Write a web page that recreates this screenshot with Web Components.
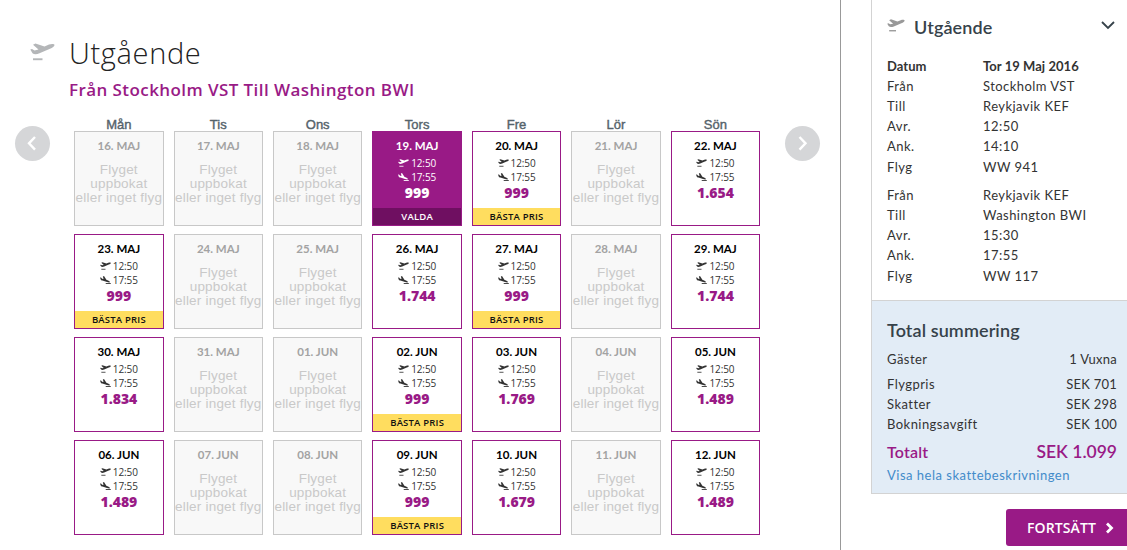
<!DOCTYPE html>
<html lang="sv">
<head>
<meta charset="utf-8">
<title>Utgående</title>
<style>
    body {
        margin: 0;
        background: #fff;
        font-family: "Lato", "Liberation Sans", sans-serif;
        color: #222;
        height: 550px;
        overflow: hidden;
    }
</style>
</head>
<body>
<booking-page></booking-page>

<script>
const PLANES = {
    takeoff: '<path d="M0.300 6.600 L2 6 L4.500 7.400 L8.500 6.600 L3 1.800 L5.500 0.400 L14.500 3.500 L19 1.600 C21.500 0.700 24.500 0.900 24.500 2 C24.500 3.400 22.500 4.800 20 5.800 L9.500 10.300 C6.500 11.600 4 11.500 2.500 10.200 Z"/><path d="M3 15.300h9.500v1.900h-9.500z"/>',
    landing: '<path d="M0.300 3.200 L2.300 3.200 L4.800 6.200 L8 7 L6.500 0.500 L9.500 0.500 L14.500 8.300 L19.500 10.500 C22 11.700 23 13.200 22.200 14.200 C21.300 15.200 18.500 14.600 16 13.600 L5.500 10.400 C3 9.500 1.500 8.300 1.100 6.500 Z"/><path d="M13 15.800h11.500v2h-11.500z"/>'
};

class PlaneIcon extends HTMLElement {
    constructor() {
        super();
        this.attachShadow({ mode: 'open' });
    }

    connectedCallback() {
        const kind = this.getAttribute('kind') || 'takeoff';
        this.shadowRoot.innerHTML = `
            <style>
                :host { display: block; flex: none; width: 24px; height: 18px; }
                svg { display: block; width: 100%; height: 100%; fill: currentColor; }
            </style>
            <svg viewBox="0 0 25 18" preserveAspectRatio="none">${PLANES[kind]}</svg>
        `;
    }
}

class RoundArrow extends HTMLElement {
    constructor() {
        super();
        this.attachShadow({ mode: 'open' });
    }

    connectedCallback() {
        const next = this.getAttribute('direction') === 'next';
        this.shadowRoot.innerHTML = `
            <style>
                :host { display: block; width: 35px; height: 35px; border-radius: 50%; background: #d5d6d8; cursor: pointer; }
                svg { display: block; fill: none; stroke: #fff; stroke-width: 2.4; }
            </style>
            <svg width="35" height="35" viewBox="0 0 35 35">
                <path d="${next ? 'M14.500 11l6 6.300-6 6.300' : 'M20 11l-6 6.300 6 6.300'}"/>
            </svg>
        `;
    }
}

class DayCell extends HTMLElement {
    constructor() {
        super();
        this.attachShadow({ mode: 'open' });
    }

    connectedCallback() {
        const date = this.getAttribute('date');
        const price = this.getAttribute('price');
        const state = this.getAttribute('state');
        const badge = { best: 'BÄSTA PRIS', selected: 'VALDA' }[state];

        const style = `
            <style>
                :host {
                    display: flex;
                    flex-direction: column;
                    box-sizing: border-box;
                    height: 95px;
                    border: 1px solid #991a86;
                    background: #fff;
                    text-align: center;
                    color: #000;
                    overflow: hidden;
                }
                :host([state="full"]) { border-color: #c8c8c8; background: #f8f8f8; color: #a3a3a3; }
                :host([state="selected"]) { background: #991a86; color: #fff; }
                .date { margin-top: 6px; font: 700 11.500px/15px "Lato", sans-serif; }
                .full { margin: 10px -4px 0; font: 13.500px/14px "Liberation Sans", sans-serif; letter-spacing: 0.2px; color: #c9c9c9; white-space: nowrap; }
                .time { display: flex; justify-content: center; align-items: center; gap: 2px; height: 14px; font: 10px/14px "Open Sans", sans-serif; letter-spacing: -0.1px; color: #333; }
                .date + .time { margin-top: 3px; }
                .time plane-icon { width: 11px; height: 8px; margin-bottom: 1px; }
                .price { font: 800 14px/18px "Open Sans", sans-serif; color: #991a86; }
                .badge { margin-top: auto; height: 17px; font: 600 9.500px/17px "Open Sans", sans-serif; letter-spacing: 0.2px; background: #ffdd5f; color: #111; }
                :host([state="selected"]) .time, :host([state="selected"]) .price { color: #fff; }
                :host([state="selected"]) .badge { background: #6f0f61; color: #fff; }
            </style>
        `;

        const content = state === 'full'
            ? '<div class="full">Flyget<br>uppbokat<br>eller inget flyg</div>'
            : `
                <div class="time"><plane-icon></plane-icon><span>12:50</span></div>
                <div class="time"><plane-icon kind="landing"></plane-icon><span>17:55</span></div>
                <div class="price">${price}</div>
                ${badge ? `<div class="badge">${badge}</div>` : ''}
            `;

        this.shadowRoot.innerHTML = `${style}<div class="date">${date}</div>${content}`;
    }
}

const WEEKDAYS = ['Mån', 'Tis', 'Ons', 'Tors', 'Fre', 'Lör', 'Sön'];

// [date, price, state], a day with no price is fully booked
const DAYS = [
    ['16. MAJ'], ['17. MAJ'], ['18. MAJ'], ['19. MAJ', '999', 'selected'], ['20. MAJ', '999', 'best'], ['21. MAJ'], ['22. MAJ', '1.654'],
    ['23. MAJ', '999', 'best'], ['24. MAJ'], ['25. MAJ'], ['26. MAJ', '1.744'], ['27. MAJ', '999', 'best'], ['28. MAJ'], ['29. MAJ', '1.744'],
    ['30. MAJ', '1.834'], ['31. MAJ'], ['01. JUN'], ['02. JUN', '999', 'best'], ['03. JUN', '1.769'], ['04. JUN'], ['05. JUN', '1.489'],
    ['06. JUN', '1.489'], ['07. JUN'], ['08. JUN'], ['09. JUN', '999', 'best'], ['10. JUN', '1.679'], ['11. JUN'], ['12. JUN', '1.489']
];

class FlightCalendar extends HTMLElement {
    constructor() {
        super();
        this.attachShadow({ mode: 'open' });
    }

    connectedCallback() {
        const heads = WEEKDAYS.map(day => `<div class="weekday">${day}</div>`).join('');
        const cells = DAYS.map(([date, price = '', state]) =>
            `<day-cell date="${date}" price="${price}" state="${price ? state || 'open' : 'full'}"></day-cell>`).join('');

        this.shadowRoot.innerHTML = `
            <style>
                :host { display: block; width: 686px; }
                .grid { display: grid; grid-template-columns: repeat(7, minmax(0, 1fr)); column-gap: 10px; row-gap: 8px; }
                .weekdays { height: 14px; }
                .weekday { text-align: center; font: 400 13px/16px "Liberation Sans", sans-serif; color: #55636b; -webkit-text-stroke: 0.4px #55636b; }
            </style>
            <div class="grid weekdays">${heads}</div>
            <div class="grid">${cells}</div>
        `;
    }
}

class InfoRow extends HTMLElement {
    constructor() {
        super();
        this.attachShadow({ mode: 'open' });
        this.shadowRoot.innerHTML = `
            <style>
                :host { display: flex; height: 20px; line-height: 20px; font-size: 13px; letter-spacing: 0.45px; }
                .label { width: 96px; flex: none; white-space: nowrap; }
                .value { white-space: nowrap; }
                :host([money]) { justify-content: space-between; }
                :host([money]) .value { letter-spacing: 0.25px; }
                :host([strong]) { font-weight: 700; letter-spacing: 0.05px; }
            </style>
            <span class="label"><slot name="label"></slot></span>
            <span class="value"><slot></slot></span>
        `;
    }
}

class TripSummary extends HTMLElement {
    constructor() {
        super();
        this.attachShadow({ mode: 'open' });
    }

    row(label, value, attrs = '') {
        return `<info-row ${attrs}><span slot="label">${label}</span><span>${value}</span></info-row>`;
    }

    connectedCallback() {
        this.shadowRoot.innerHTML = `
            <style>
                :host { display: block; width: 256px; font-family: "Lato", sans-serif; color: #333; }
                .panel { box-sizing: border-box; border-left: 1px solid #d3d3d3; border-bottom: 1px solid #d3d3d3; padding: 0 10px 0 15px; }
                .trip { height: 301px; }
                .total { height: 193px; background: #e2ecf6; overflow: hidden; }
                header { display: flex; align-items: center; height: 56px; }
                header plane-icon { width: 18px; height: 13px; color: #999; margin-bottom: 6px; }
                h2 { margin: 0 auto 0 9px; font: 600 18px/24px "Lato", sans-serif; letter-spacing: 0.1px; color: #36424a; }
                .trip h2 { padding-bottom: 2px; }
                .chevron { width: 14px; height: 9px; margin: 0 2px 6px 0; fill: none; stroke: #36424a; stroke-width: 1.8; }
                .leg { padding-bottom: 8px; }
                .leg info-row:last-child { padding-top: 1px; }
                .total h2 { margin: 17px 0 7px; }
                .guests { margin-bottom: 5px; }
                .sum { display: flex; justify-content: space-between; margin-top: 6px; font-weight: 600; color: #991a86; line-height: 24px; font-size: 16px; letter-spacing: 0.2px; }
                .sum b { font-size: 17.500px; font-weight: 600; letter-spacing: 0; }
                a { display: block; color: #428bca; font-size: 13px; line-height: 22px; letter-spacing: 0.5px; text-decoration: none; white-space: nowrap; }
            </style>
            <div class="panel trip">
                <header>
                    <plane-icon></plane-icon>
                    <h2>Utgående</h2>
                    <svg class="chevron" viewBox="0 0 14 9"><path d="M1 1l6 6 6-6"/></svg>
                </header>
                <div class="leg">
                    ${this.row('Datum', 'Tor 19 Maj 2016', 'strong')}
                    ${this.row('Från', 'Stockholm VST')}
                    ${this.row('Till', 'Reykjavik KEF')}
                    ${this.row('Avr.', '12:50')}
                    ${this.row('Ank.', '14:10')}
                    ${this.row('Flyg', 'WW 941')}
                </div>
                <div class="leg">
                    ${this.row('Från', 'Reykjavik KEF')}
                    ${this.row('Till', 'Washington BWI')}
                    ${this.row('Avr.', '15:30')}
                    ${this.row('Ank.', '17:55')}
                    ${this.row('Flyg', 'WW 117')}
                </div>
            </div>
            <div class="panel total">
                <h2>Total summering</h2>
                ${this.row('Gäster', '1 Vuxna', 'money class="guests"')}
                ${this.row('Flygpris', 'SEK 701', 'money')}
                ${this.row('Skatter', 'SEK 298', 'money')}
                ${this.row('Bokningsavgift', 'SEK 100', 'money')}
                <div class="sum"><span>Totalt</span><b>SEK 1.099</b></div>
                <a>Visa hela skattebeskrivningen</a>
            </div>
        `;
    }
}

class NextButton extends HTMLElement {
    constructor() {
        super();
        this.attachShadow({ mode: 'open' });
        this.shadowRoot.innerHTML = `
            <style>
                :host { display: block; }
                button { display: flex; align-items: center; box-sizing: border-box; width: 121px; height: 37px; padding: 0 0 0 21px; border: 0; border-radius: 3px 0 0 3px; background: #991a86; color: #fff; font: 600 14px/37px "Open Sans", sans-serif; letter-spacing: 0.1px; white-space: nowrap; }
                svg { margin-left: auto; margin-right: 13px; fill: none; stroke: #fff; stroke-width: 2.8; }
            </style>
            <button><slot></slot><svg width="9" height="12" viewBox="0 0 9 12"><path d="M2 1.500l4.500 4.500-4.500 4.500"/></svg></button>
        `;
    }
}

class BookingPage extends HTMLElement {
    constructor() {
        super();
        this.attachShadow({ mode: 'open' });
        this.shadowRoot.innerHTML = `
            <style>
                :host { display: flex; height: 550px; }
                main { box-sizing: border-box; width: 841px; flex: none; border-right: 1px solid #999; padding: 34px 0 0 15px; }
                aside { padding-left: 30px; display: flex; flex-direction: column; }
                .heading { display: flex; }
                .heading plane-icon { margin: 9px 14px 0 15px; width: 25px; height: 18px; color: #b4b6b8; }
                h1 { margin: 0; font: 300 29px/38px "Open Sans", sans-serif; letter-spacing: 0.65px; color: #222; }
                .route { margin: 7px 0 0 54px; font: 600 17px/22px "Open Sans", sans-serif; letter-spacing: 0.42px; color: #991a86; white-space: nowrap; }
                .picker { display: flex; margin-top: 16px; }
                .picker round-arrow { margin-top: 9px; }
                flight-calendar { margin: 0 24.850px 0 24.150px; }
                next-button { margin-top: 15px; align-self: flex-end; }
            </style>
            <main>
                <div class="heading"><plane-icon></plane-icon><h1>Utgående</h1></div>
                <div class="route">Från Stockholm VST Till Washington BWI</div>
                <div class="picker">
                    <round-arrow></round-arrow>
                    <flight-calendar></flight-calendar>
                    <round-arrow direction="next"></round-arrow>
                </div>
            </main>
            <aside>
                <trip-summary></trip-summary>
                <next-button>FORTSÄTT</next-button>
            </aside>
        `;
    }
}

customElements.define('plane-icon', PlaneIcon);
customElements.define('round-arrow', RoundArrow);
customElements.define('day-cell', DayCell);
customElements.define('flight-calendar', FlightCalendar);
customElements.define('info-row', InfoRow);
customElements.define('trip-summary', TripSummary);
customElements.define('next-button', NextButton);
customElements.define('booking-page', BookingPage);
</script>
</body>
</html>
